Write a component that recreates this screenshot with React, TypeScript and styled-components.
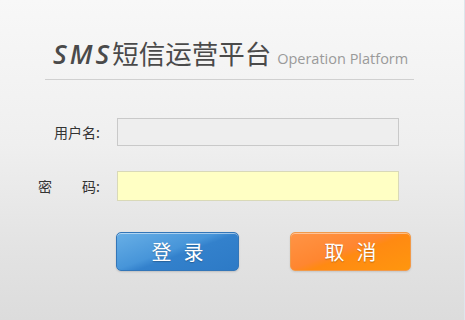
import React from "react";
import styled, { createGlobalStyle, css } from "styled-components";

const GlobalStyle = createGlobalStyle`
  html, body {
    margin: 0;
    padding: 0;
  }
  body {
    font-family: "Noto Sans CJK SC", "Noto Sans", sans-serif;
  }
`;

const Page = styled.div`
  box-sizing: border-box;
  width: 465px;
  height: 320px;
  overflow: hidden;
  background: linear-gradient(180deg, #f8f8f8 0%, #efefef 45%, #e2e2e2 80%, #dcdcdc 100%);
  border-right: 1px solid #dde6ec;
  padding: 36px 50px 0 45px;
`;

const Header = styled.div`
  display: flex;
  align-items: baseline;
  padding-left: 8px;
  padding-bottom: 8px;
  border-bottom: 1px solid #d0d0d0;
`;

const Brand = styled.span`
  font-size: 26.5px;
  line-height: 34px;
  color: #4a4a4a;
`;

const Latin = styled.span`
  font-family: "Open Sans", "Noto Sans", sans-serif;
  font-style: italic;
  font-weight: 600;
  letter-spacing: 3px;
`;

const Subtitle = styled.span`
  font-family: "Open Sans", "Noto Sans", sans-serif;
  font-size: 14.5px;
  color: #9a9a9a;
  margin-left: 6px;
`;

const Form = styled.div`
  display: grid;
  grid-template-columns: 62px 282px;
  column-gap: 17px;
  row-gap: 25px;
  margin: 38px 0 0 -7px;
  align-items: center;
`;

const Label = styled.div<{ $spread?: boolean }>`
  display: flex;
  justify-content: ${(p) => (p.$spread ? "space-between" : "flex-end")};
  font-size: 14px;
  color: #333;
`;

const Field = styled.input<{ $tone: "grey" | "yellow" }>`
  box-sizing: border-box;
  width: 100%;
  margin: 0;
  outline: none;
  padding: 0 6px;
  font-size: 13px;
  ${(p) =>
    p.$tone === "grey"
      ? css`
          height: 28px;
          background: #eeeeee;
          border: 1px solid #c9c9c9;
        `
      : css`
          height: 30px;
          background: #ffffc4;
          border: 1px solid #d9d9b8;
        `}
`;

const Actions = styled.div`
  display: flex;
  gap: 51px;
  margin: 31px 0 0 71px;
`;

const Button = styled.button<{ $variant: "blue" | "orange" }>`
  width: 123px;
  height: 39px;
  border-radius: 5px;
  font-family: "Noto Sans CJK SC", sans-serif;
  font-size: 20px;
  letter-spacing: 12px;
  text-indent: 12px;
  color: #fff;
  text-shadow: 0 1px 1px rgba(0, 0, 0, 0.25);
  cursor: pointer;
  ${(p) =>
    p.$variant === "blue"
      ? css`
          border: 1px solid #3376b8;
          background: linear-gradient(160deg, #68afe6 0%, #4795d9 45%, #3381cc 55%, #2d7ac6 100%);
          box-shadow: inset 0 1px 0 rgba(255, 255, 255, 0.5), 0 1px 2px rgba(0, 0, 0, 0.15);
        `
      : css`
          width: 121px;
          border: 1px solid #f19a4a;
          background: linear-gradient(160deg, #ff9446 0%, #ff8630 45%, #ff8a12 55%, #ff960e 100%);
          box-shadow: inset 0 1px 0 rgba(255, 255, 255, 0.45), 0 1px 2px rgba(0, 0, 0, 0.12);
        `}
`;

export default function App() {
  return (
    <>
      <GlobalStyle />
      <Page>
        <Header>
          <Brand>
            <Latin>SMS</Latin>短信运营平台
          </Brand>
          <Subtitle>Operation Platform</Subtitle>
        </Header>
        <Form>
          <Label>用户名:</Label>
          <Field $tone="grey" type="text" />
          <Label $spread>
            <span>密</span>
            <span>码:</span>
          </Label>
          <Field $tone="yellow" type="password" />
        </Form>
        <Actions>
          <Button $variant="blue">登录</Button>
          <Button $variant="orange">取消</Button>
        </Actions>
      </Page>
    </>
  );
}
